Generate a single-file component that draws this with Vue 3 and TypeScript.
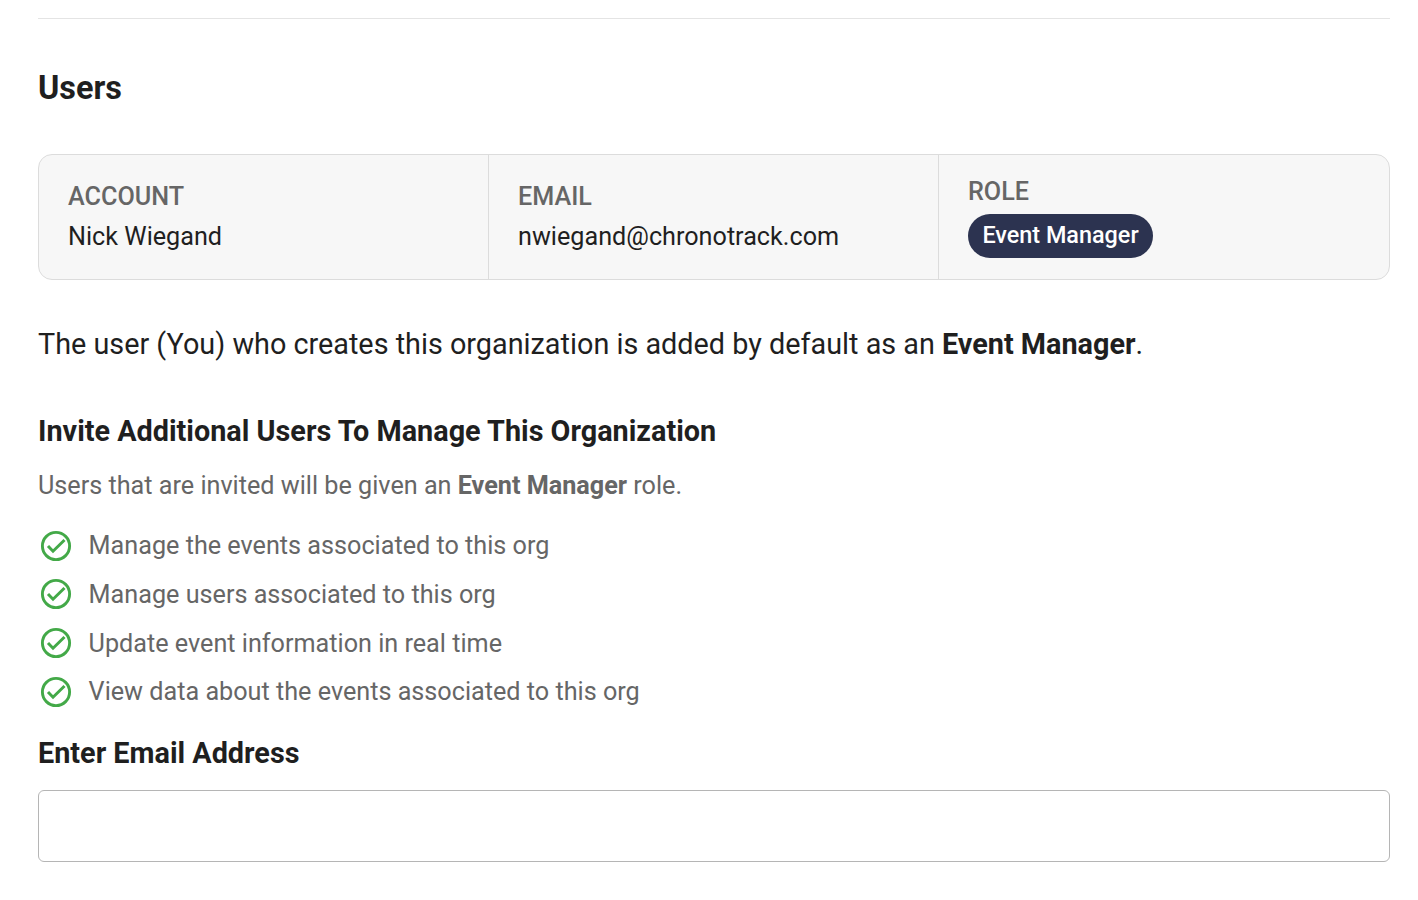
<template>
  <div class="page">
    <hr class="rule" />
    <h2 class="title">Users</h2>
    <div class="user-table">
      <div class="cell">
        <span class="label">ACCOUNT</span>
        <span class="value">Nick Wiegand</span>
      </div>
      <div class="cell">
        <span class="label">EMAIL</span>
        <span class="value">nwiegand@chronotrack.com</span>
      </div>
      <div class="cell role-cell">
        <span class="label">ROLE</span>
        <span class="badge">Event Manager</span>
      </div>
    </div>
    <p class="note">The user (You) who creates this organization is added by default as an <b>Event Manager</b>.</p>
    <h3 class="subtitle">Invite Additional Users To Manage This Organization</h3>
    <p class="desc">Users that are invited will be given an <b>Event Manager</b> role.</p>
    <ul class="perms">
      <li v-for="p in perms" :key="p" class="perm">
        <svg class="check" width="32" height="32" viewBox="0 0 32 32" fill="none">
          <circle cx="16" cy="16" r="13.6" stroke="#43a948" stroke-width="2.9" />
          <path d="M8 16l5 5.2L24.5 10" stroke="#43a948" stroke-width="3" />
        </svg>
        <span>{{ p }}</span>
      </li>
    </ul>
    <label class="field-label" for="email">Enter Email Address</label>
    <input id="email" class="field" type="text" />
  </div>
</template>

<script setup lang="ts">
const perms: string[] = [
  'Manage the events associated to this org',
  'Manage users associated to this org',
  'Update event information in real time',
  'View data about the events associated to this org',
]
</script>

<style>
html, body { background: #fff; }
</style>

<style scoped>
.page {
  box-sizing: border-box;
  width: 1418px;
  height: 900px;
  overflow: hidden;
  padding: 18px 28px 0 38px;
  font-family: Roboto, "Liberation Sans", sans-serif;
  color: #1f1f1f;
}
.rule {
  margin: 0;
  border: 0;
  border-top: 1px solid #e4e4e4;
}
.title {
  margin: 51px 0 0;
  font-size: 32.4px;
  line-height: 36px;
  font-weight: 700;
}
.user-table {
  display: grid;
  grid-template-columns: 450px 450px 1fr;
  height: 126px;
  box-sizing: border-box;
  margin-top: 48px;
  border: 1px solid #dcdcdc;
  border-radius: 14px;
  background: #f7f7f7;
}
.cell {
  display: flex;
  flex-direction: column;
  justify-content: center;
  padding-left: 29px;
  padding-bottom: 1px;
  border-right: 1px solid #dcdcdc;
}
.cell:last-child { border-right: 0; }
.label {
  font-size: 25.2px;
  line-height: 30px;
  font-weight: 500;
  color: #666;
}
.value {
  margin-top: 10px;
  font-size: 25.2px;
  line-height: 30px;
}
.role-cell { padding-bottom: 0; }
.badge {
  align-self: flex-start;
  margin-top: 7px;
  padding: 0 14.4px;
  height: 44px;
  line-height: 43px;
  border-radius: 22px;
  background: #2c3350;
  color: #fff;
  font-size: 23.4px;
  font-weight: 500;
}
.note {
  margin: 46px 0 0;
  font-size: 28.8px;
  line-height: 36px;
}
.subtitle {
  margin: 51px 0 0;
  font-size: 28.8px;
  line-height: 36px;
  font-weight: 700;
}
.desc {
  margin: 19px 0 0;
  font-size: 25.2px;
  line-height: 36px;
  color: #666;
}
.perms {
  list-style: none;
  margin: 17.4px 0 0;
  padding: 0;
  color: #666;
  font-size: 25.2px;
}
.perm {
  display: flex;
  align-items: center;
  gap: 16.6px;
  height: 48.7px;
  padding-left: 2px;
}
.check { flex: none; }
.field-label {
  display: block;
  margin-top: 18.6px;
  font-size: 28.8px;
  line-height: 36px;
  font-weight: 700;
}
.field {
  display: block;
  box-sizing: border-box;
  width: 100%;
  height: 72px;
  margin-top: 19px;
  border: 1px solid #b5b5b5;
  border-radius: 6px;
  background: #fff;
}
</style>
